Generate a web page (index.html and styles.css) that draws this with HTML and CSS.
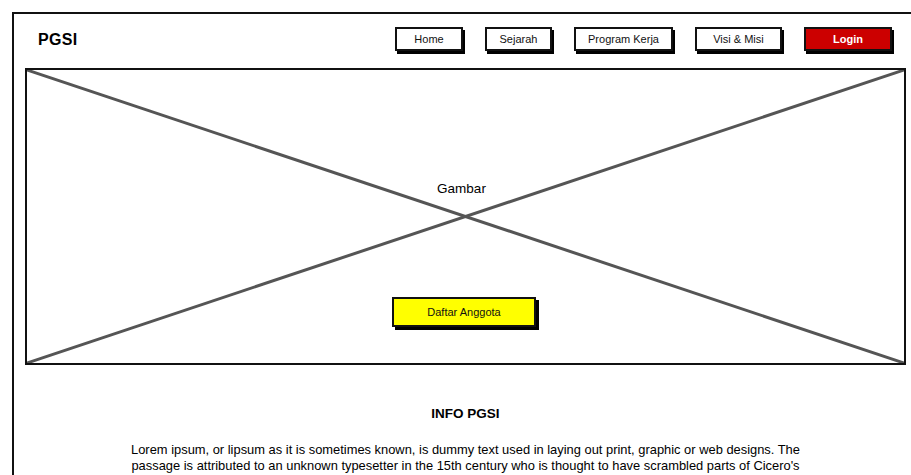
FILE: index.html
```html
<!DOCTYPE html>
<html lang="id">
<head>
<meta charset="utf-8">
<title>PGSI</title>
<link rel="stylesheet" href="styles.css">
</head>
<body>
<div class="frame">
  <header class="header">
    <div class="logo">PGSI</div>
    <nav class="nav">
      <a class="btn btn-home" href="#">Home</a>
      <a class="btn btn-sejarah" href="#">Sejarah</a>
      <a class="btn btn-program" href="#">Program Kerja</a>
      <a class="btn btn-visi" href="#">Visi &amp; Misi</a>
      <a class="btn btn-login" href="#">Login</a>
    </nav>
  </header>
  <section class="hero">
    <svg class="hero-x" viewBox="0 0 877 293" preserveAspectRatio="none">
      <line x1="0" y1="0" x2="877" y2="293"/>
      <line x1="877" y1="0" x2="0" y2="293"/>
    </svg>
    <div class="hero-label">Gambar</div>
    <a class="btn-daftar" href="#">Daftar Anggota</a>
  </section>
  <section class="info">
    <h2 class="info-title">INFO PGSI</h2>
    <p class="info-text">Lorem ipsum, or lipsum as it is sometimes known, is dummy text used in laying out print, graphic or web designs. The passage is attributed to an unknown typesetter in the 15th century who is thought to have scrambled parts of Cicero's De Finibus Bonorum et Malorum for use in a type specimen book.</p>
  </section>
</div>
</body>
</html>
```
FILE: styles.css
```css
html, body {
  margin: 0;
  padding: 0;
  overflow: hidden;
  background: #fff;
}
body {
  font-family: "Liberation Sans", Arial, sans-serif;
  color: #000;
}
.frame {
  margin: 12px 0 0 12px;
  width: 897px;
  min-height: 480px;
  border-top: 2px solid #111;
  border-left: 2px solid #111;
}
.header {
  box-sizing: border-box;
  height: 54px;
  display: flex;
  align-items: center;
  padding: 0 19px 4px 24px;
}
.logo {
  font-weight: bold;
  font-size: 16px;
  letter-spacing: 0.3px;
  margin-top: 1px;
}
.nav {
  margin-left: auto;
  display: flex;
  gap: 22px;
}
.btn {
  box-sizing: border-box;
  height: 24px;
  display: flex;
  align-items: center;
  justify-content: center;
  border: 2px solid #111;
  box-shadow: 2px 3px 0 #000;
  background: #fff;
  color: #111;
  font-size: 11px;
  text-decoration: none;
}
.btn-home { width: 68px; }
.btn-sejarah { width: 67px; }
.btn-program { width: 99px; }
.btn-visi { width: 87px; }
.btn-login {
  width: 88px;
  background: #cc0000;
  color: #fff;
  font-weight: bold;
}
.hero {
  position: relative;
  box-sizing: border-box;
  margin-left: 11px;
  width: 881px;
  height: 297px;
  border: 2px solid #111;
  display: flex;
  flex-direction: column;
  align-items: center;
  padding-top: 111px;
}
.hero-x {
  position: absolute;
  inset: 0;
  width: 100%;
  height: 100%;
}
.hero-x line {
  stroke: #555;
  stroke-width: 3;
  vector-effect: non-scaling-stroke;
}
.hero-label {
  position: relative;
  margin-left: -8px;
  font-size: 13.5px;
  line-height: 16px;
}
.btn-daftar {
  position: relative;
  box-sizing: border-box;
  margin-top: 100px;
  margin-left: -3px;
  width: 144px;
  height: 30px;
  display: flex;
  align-items: center;
  justify-content: center;
  background: #ffff00;
  border: 2px solid #111;
  box-shadow: 3px 3px 0 #000;
  font-size: 11px;
  color: #111;
  text-decoration: none;
}
.info {
  padding-top: 41px;
  display: flex;
  flex-direction: column;
  align-items: center;
  margin-left: 11px;
  width: 881px;
}
.info-title {
  margin: 0;
  font-size: 13.5px;
  line-height: 16px;
  font-weight: bold;
}
.info-text {
  margin: 20px 0 0;
  max-width: 680px;
  text-align: center;
  font-size: 12.9px;
  line-height: 16px;
}
```
